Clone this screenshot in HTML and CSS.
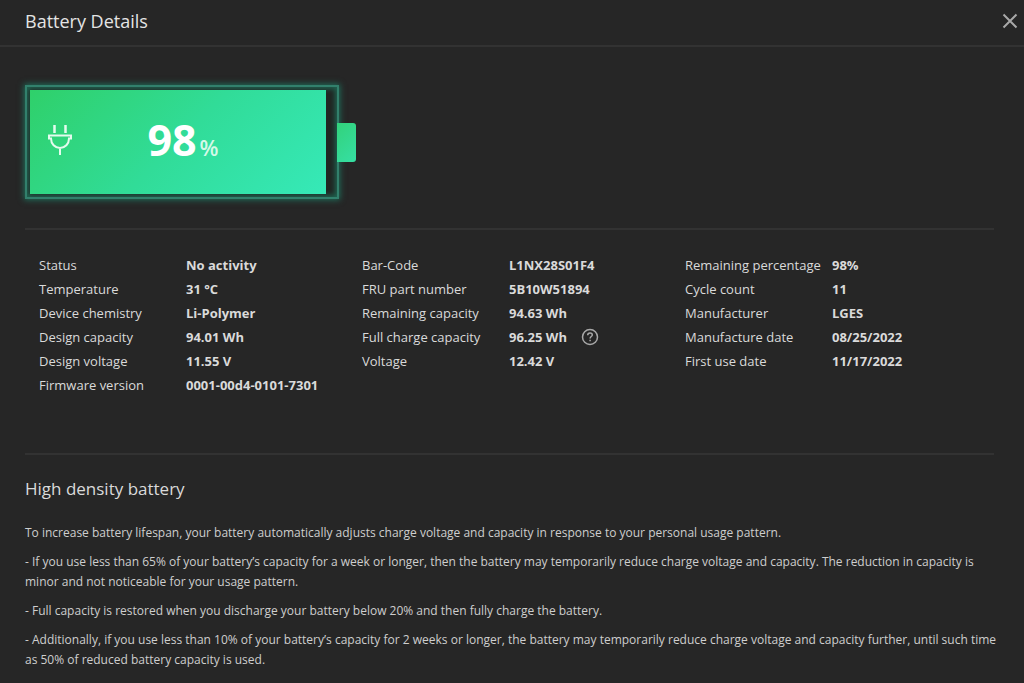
FILE: index.html
```html
<!DOCTYPE html>
<html lang="en">
<head>
<meta charset="utf-8">
<meta name="viewport" content="width=device-width, initial-scale=1">
<title>Battery Details</title>
<link rel="stylesheet" href="styles.css">
</head>
<body>
<header class="titlebar">
  <h1 class="titlebar-title">Battery Details</h1>
  <button class="icon-button" type="button" aria-label="Close">
    <svg width="16" height="16" viewBox="0 0 16 16" fill="none" stroke="currentColor" stroke-width="2" aria-hidden="true"><path d="M1.500 1.500 14.500 14.500M14.500 1.500 1.500 14.500"/></svg>
  </button>
</header>
<main class="content">
  <section class="gauge" aria-label="Charge level">
    <div class="battery">
      <div class="battery-fill" style="width: 98%">
        <svg class="plug" width="26" height="32" viewBox="0 0 26 32" fill="none" stroke="currentColor" stroke-width="2" aria-hidden="true"><path stroke-width="2.500" d="M7.500 1v8M18.500 1v8"/><path d="M2 11.500h22v3h-2c0 5.500-4 9.500-9 9.500s-9-4-9-9.500H2zM13 24v7"/></svg>
        <p class="level"><span class="level-value">98</span><span class="level-unit">%</span></p>
      </div>
    </div>
    <div class="battery-terminal"></div>
  </section>

  <section class="details" aria-label="Battery information">
    <dl class="facts">
      <dt>Status</dt><dd>No activity</dd>
      <dt>Temperature</dt><dd>31 °C</dd>
      <dt>Device chemistry</dt><dd>Li-Polymer</dd>
      <dt>Design capacity</dt><dd>94.01 Wh</dd>
      <dt>Design voltage</dt><dd>11.55 V</dd>
      <dt>Firmware version</dt><dd>0001-00d4-0101-7301</dd>
    </dl>
    <dl class="facts">
      <dt>Bar-Code</dt><dd>L1NX28S01F4</dd>
      <dt>FRU part number</dt><dd>5B10W51894</dd>
      <dt>Remaining capacity</dt><dd>94.63 Wh</dd>
      <dt>Full charge capacity</dt>
      <dd>96.25 Wh
        <button class="icon-button" type="button" aria-label="About full charge capacity">
          <svg width="18" height="18" viewBox="0 0 18 18" fill="none" stroke="currentColor" stroke-width="1.500" aria-hidden="true"><circle cx="9" cy="9" r="7.500"/><path d="M6.700 7.200c0-1.400 1-2.300 2.300-2.300s2.300.8 2.300 2c0 1.600-2.200 1.700-2.200 3.500M9.100 11.700v1.500"/></svg>
        </button>
      </dd>
      <dt>Voltage</dt><dd>12.42 V</dd>
    </dl>
    <dl class="facts">
      <dt>Remaining percentage</dt><dd>98%</dd>
      <dt>Cycle count</dt><dd>11</dd>
      <dt>Manufacturer</dt><dd>LGES</dd>
      <dt>Manufacture date</dt><dd>08/25/2022</dd>
      <dt>First use date</dt><dd>11/17/2022</dd>
    </dl>
  </section>

  <section class="notes">
    <h2 class="notes-title">High density battery</h2>
    <p>To increase battery lifespan, your battery automatically adjusts charge voltage and capacity in response to your personal usage pattern.</p>
    <p>- If you use less than 65% of your battery’s capacity for a week or longer, then the battery may temporarily reduce charge voltage and capacity. The reduction in capacity is minor and not noticeable for your usage pattern.</p>
    <p>- Full capacity is restored when you discharge your battery below 20% and then fully charge the battery.</p>
    <p>- Additionally, if you use less than 10% of your battery’s capacity for 2 weeks or longer, the battery may temporarily reduce charge voltage and capacity further, until such time as 50% of reduced battery capacity is used.</p>
  </section>
</main>
</body>
</html>
```
FILE: styles.css
```css
* {
  box-sizing: border-box;
}

body {
  margin: 0;
  background: #262626;
  color: #dadada;
  font-family: "Open Sans", "Noto Sans", sans-serif;
  font-size: 13px;
  line-height: 20px;
}

h1, h2, p, dl, dd {
  margin: 0;
}

.titlebar {
  display: flex;
  justify-content: space-between;
  align-items: center;
  padding: 7px 6px 10px 25px;
  border-bottom: 2px solid #323232;
}

.titlebar-title {
  color: #e4e4e4;
  font-size: 18px;
  font-weight: 400;
  line-height: 28px;
}

.icon-button {
  display: flex;
  padding: 0;
  border: 0;
  background: none;
  color: #a8a8a8;
  cursor: pointer;
}

.content {
  padding: 0 30px 12px 25px;
}

.gauge {
  display: flex;
  align-items: center;
  padding: 38px 0 29px;
}

.battery {
  width: 314px;
  height: 114px;
  padding: 3px 5px 3px 3px;
  border: 2px solid #32806c;
  background: #202623;
  box-shadow: 0 0 6px 1px #1f6e5a, inset 0 0 5px 2px #1f6350;
}

.battery-fill {
  display: grid;
  grid-template-columns: 60px 1fr 50px;
  align-items: center;
  height: 100%;
  padding-bottom: 4px;
  background: linear-gradient(135deg, #2fd06a, #31dc98 50%, #36e9b8);
  color: #ffffff;
}

.plug {
  justify-self: center;
  color: #e4fbee;
}

.level {
  display: flex;
  align-items: baseline;
  justify-content: center;
  gap: 3px;
}

.level-value {
  font-size: 43px;
  font-weight: 700;
  line-height: 56px;
}

.level-unit {
  color: #d4f9e8;
  font-size: 22px;
  font-weight: 600;
}

.battery-terminal {
  width: 19px;
  height: 39px;
  margin-left: -2px;
  border-radius: 0 3px 3px 0;
  background: linear-gradient(135deg, #32d27b, #36dfa4);
}

.details {
  display: grid;
  grid-template-columns: repeat(3, 1fr);
  padding: 23px 0 56px;
  border-top: 2px solid #323232;
  border-bottom: 2px solid #323232;
}

.facts {
  display: grid;
  grid-template-columns: 147px 1fr;
  grid-auto-rows: 24px;
  align-content: start;
  align-items: center;
  padding-left: 14px;
}

.facts dd {
  display: flex;
  align-items: center;
  gap: 14px;
  font-weight: 700;
}

.notes {
  display: flex;
  flex-direction: column;
  gap: 9px;
  margin-right: -12px;
  padding-top: 20px;
  color: #cecece;
  font-size: 12px;
}

.notes-title {
  margin-bottom: 11px;
  color: #dadada;
  font-size: 17px;
  font-weight: 400;
  line-height: 28px;
}
```
